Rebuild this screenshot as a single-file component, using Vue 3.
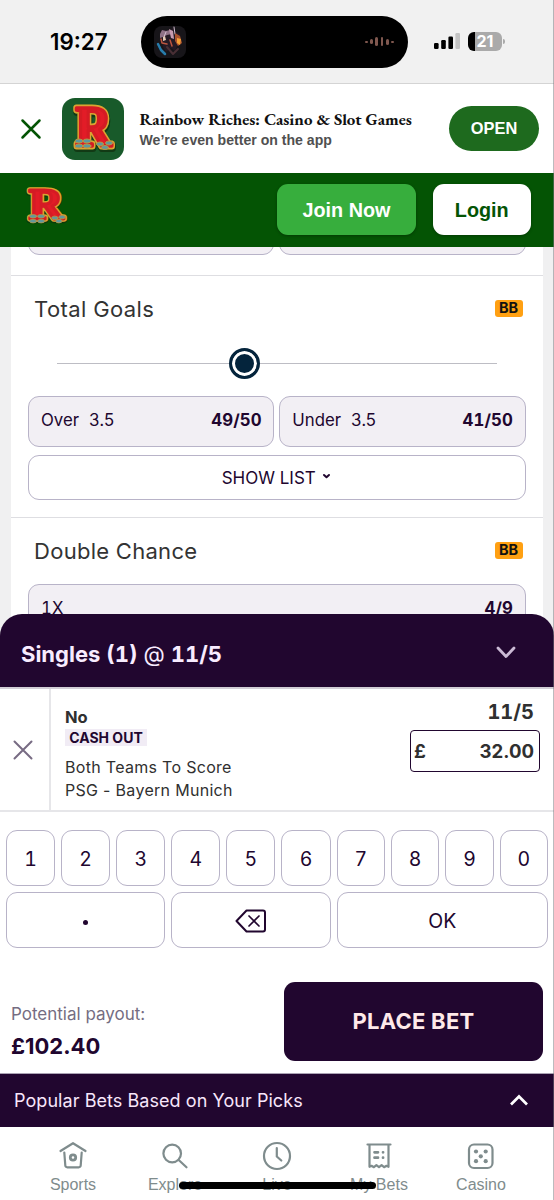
<script setup>
import { ref, computed } from 'vue'

const stake = ref('32.00')
const sliderPos = ref(42.9)

const potentialPayout = computed(() => (Number(stake.value) * 3.2).toFixed(2))

const selections = [
  { name: 'Over', line: '3.5', odds: '49/50' },
  { name: 'Under', line: '3.5', odds: '41/50' }
]

const digits = ['1', '2', '3', '4', '5', '6', '7', '8', '9', '0']
const bars = [2, 5, 9, 9, 6, 2]

function press(key) {
  stake.value += key
}

function backspace() {
  stake.value = stake.value.slice(0, -1)
}
</script>

<template>
  <div class="screen">
    <div class="status">
      <div class="time">19:27</div>
      <div class="island">
        <svg class="art" width="32" height="32" viewBox="0 0 32 32">
          <rect width="32" height="32" rx="8" fill="#171519" />
          <path d="M7 6l4-2 4 1 4-4 3 5 4 2 1 9-4 3-2 5-4-3-5 4-3-5-2-8z" fill="#241a24" />
          <path d="M6 8l2-4 4 1 4-1 2 4-5 1-4 2-3 1z" fill="#8f7286" />
          <path d="M15 3l2 9 3 1-1-8z" fill="#c79bb0" />
          <path d="M20 1l1 7M12 6l-2 5" stroke="#d3bfd0" stroke-width="1" />
          <path d="M9 11l2-1 1 4-3 1z" fill="#e2c9b4" />
          <path d="M21 7l5 3 2 7-4 3-3-5z" fill="#a9522e" />
          <path d="M23 12l4 1-1 6-3-2z" fill="#f5a136" />
          <path d="M7 13l1 4 5 1M16 14l2 6" stroke="#bc553f" stroke-width="1.5" fill="none" />
          <path d="M4 18l3 6 4 4" stroke="#287dac" stroke-width="2.5" fill="none" />
          <path d="M13 21l6 7 5-5" stroke="#492f35" stroke-width="2" fill="none" />
        </svg>
        <div class="wave">
          <i v-for="(h, i) in bars" :key="i" :style="{ height: h + 'px' }"></i>
        </div>
      </div>
      <svg class="signal" width="26" height="16" viewBox="0 0 26 16">
        <rect x="0" y="10" width="4.6" height="6" rx="1.2" />
        <rect x="7.2" y="7" width="4.6" height="9" rx="1.2" />
        <rect x="14.4" y="3.5" width="4.6" height="12.5" rx="1.2" />
        <rect x="21.4" y="0" width="4.6" height="16" rx="1.2" fill="#c4c4c4" />
      </svg>
      <div class="battery"><span>21</span></div>
      <i class="battery-tip"></i>
    </div>

    <div class="banner">
      <svg class="banner-close" width="20" height="20" viewBox="0 0 20 20">
        <path d="M1.5 1.5l17 17M18.5 1.5l-17 17" />
      </svg>
      <div class="app-icon">
        <svg width="62" height="62" viewBox="0 0 62 62">
          <text class="r r-shadow" x="14" y="49.5" textLength="36" lengthAdjust="spacingAndGlyphs">R</text>
          <text class="r r-gold" x="13.5" y="47.5" textLength="36" lengthAdjust="spacingAndGlyphs">R</text>
          <text class="r r-red" x="13.5" y="47.5" textLength="36" lengthAdjust="spacingAndGlyphs">R</text>
          <g class="clover">
            <ellipse cx="17" cy="43" rx="4" ry="2" /><ellipse cx="25" cy="43" rx="4" ry="2" />
            <ellipse cx="17" cy="48" rx="4" ry="2" /><ellipse cx="25" cy="48" rx="4" ry="2" />
            <ellipse cx="38" cy="46" rx="3.5" ry="2" /><ellipse cx="47" cy="45" rx="3.5" ry="2" />
            <ellipse cx="43" cy="49.5" rx="3.5" ry="2" />
          </g>
        </svg>
      </div>
      <div class="banner-text">
        <div class="banner-title">Rainbow Riches: Casino &amp; Slot Games</div>
        <div class="banner-sub">We’re even better on the app</div>
      </div>
      <button class="open">OPEN</button>
    </div>

    <header class="header">
      <svg class="logo" width="50" height="50" viewBox="0 0 62 62">
        <text class="r r-shadow" x="9.5" y="50" textLength="43" lengthAdjust="spacingAndGlyphs">R</text>
        <text class="r r-gold" x="9.5" y="48.5" textLength="43" lengthAdjust="spacingAndGlyphs">R</text>
        <text class="r r-red" x="9.5" y="48.5" textLength="43" lengthAdjust="spacingAndGlyphs">R</text>
        <g class="clover">
          <ellipse cx="15" cy="45" rx="4.5" ry="2.2" /><ellipse cx="25" cy="45" rx="4.5" ry="2.2" />
          <ellipse cx="15" cy="51" rx="4.5" ry="2.2" /><ellipse cx="25" cy="51" rx="4.5" ry="2.2" />
          <ellipse cx="42" cy="47" rx="4" ry="2.2" /><ellipse cx="51" cy="46" rx="4" ry="2.2" />
          <ellipse cx="47" cy="51" rx="4" ry="2.2" />
        </g>
      </svg>
      <button class="join">Join Now</button>
      <button class="login">Login</button>
    </header>

    <main class="markets">
      <div class="panel">
        <section class="market market-cut">
          <div class="odds-row">
            <div class="odd"></div>
            <div class="odd"></div>
          </div>
        </section>

        <section class="market">
          <div class="market-head">
            <h2 class="goals">Total Goals</h2>
            <span class="bb">BB</span>
          </div>
          <div class="slider">
            <div class="knob" :style="{ left: sliderPos + '%' }"></div>
          </div>
          <div class="odds-row">
            <div v-for="s in selections" :key="s.name" class="odd">
              <span class="odd-name">{{ s.name }}</span>
              <span class="odd-line">{{ s.line }}</span>
              <b>{{ s.odds }}</b>
            </div>
          </div>
          <div class="show-list">
            SHOW LIST
            <svg width="7" height="5" viewBox="0 0 7 5"><path d="M1 1l2.5 2.3L6 1" /></svg>
          </div>
        </section>

        <section class="market">
          <div class="market-head">
            <h2 class="double">Double Chance</h2>
            <span class="bb">BB</span>
          </div>
          <div class="odd odd-wide">
            <span>1X</span>
            <b>4/9</b>
          </div>
        </section>
      </div>
    </main>

    <div class="slip">
      <div class="slip-head">
        <div class="slip-title">Singles (1) <span>@</span> 11/5</div>
        <svg width="20" height="14" viewBox="0 0 20 14"><path d="M2 2l8 8.5L18 2" /></svg>
      </div>

      <div class="bet">
        <div class="bet-remove">
          <svg width="20" height="20" viewBox="0 0 20 20"><path d="M1.5 1.5l17 17M18.5 1.5l-17 17" /></svg>
        </div>
        <div class="bet-info">
          <div class="bet-pick">No</div>
          <div class="cash-out">CASH OUT</div>
          <div class="bet-market">Both Teams To Score</div>
          <div class="bet-event">PSG - Bayern Munich</div>
        </div>
        <div class="bet-stake">
          <div class="bet-odds">11/5</div>
          <div class="stake-box"><span>£</span><span>{{ stake }}</span></div>
        </div>
      </div>

      <div class="keypad">
        <button v-for="d in digits" :key="d" class="key" @click="press(d)">{{ d }}</button>
        <button class="key key-3" @click="press('.')"><i class="dot"></i></button>
        <button class="key key-3" @click="backspace">
          <svg width="32" height="24" viewBox="0 0 32 24">
            <path d="M11.5 1.5H28a2 2 0 0 1 2 2v17a2 2 0 0 1-2 2H11.5L1.5 12z" stroke-width="2" />
            <path d="M14 7l10 10M24 7L14 17" stroke-width="1.7" />
          </svg>
        </button>
        <button class="key key-4">OK</button>
      </div>

      <div class="place">
        <div class="payout">
          <div class="payout-label">Potential payout:</div>
          <div class="payout-value">£{{ potentialPayout }}</div>
        </div>
        <button class="place-bet">PLACE BET</button>
      </div>

      <div class="popular">
        <span>Popular Bets Based on Your Picks</span>
        <svg width="20" height="13" viewBox="0 0 20 13"><path d="M2 10.5l8-8 8 8" /></svg>
      </div>
    </div>

    <nav class="nav">
      <div class="nav-item">
        <svg width="30" height="30" viewBox="0 0 30 30">
          <path d="M2.5 11L15 3.2 27.5 11" />
          <path d="M6.3 12.5l1 13a2 2 0 0 0 2 1.800h11.4a2 2 0 0 0 2-1.800l1-13" />
          <circle cx="15" cy="17.5" r="2.700" stroke-width="2.800" />
        </svg>
        <span>Sports</span>
      </div>
      <div class="nav-item">
        <svg width="30" height="30" viewBox="0 0 30 30">
          <circle cx="12.2" cy="13.5" r="8.800" />
          <path d="M18.7 20l7.800 7.300" />
        </svg>
        <span>Explore</span>
      </div>
      <div class="nav-item">
        <svg width="30" height="30" viewBox="0 0 30 30">
          <circle cx="15" cy="16" r="13" />
          <path d="M14.8 8v8.500l4.500 4" />
        </svg>
        <span>Live</span>
      </div>
      <div class="nav-item">
        <svg width="30" height="30" viewBox="0 0 30 30">
          <path d="M3.5 4.500h23M5.500 5v21.800l2-1 2.400 1.400 2.500-2 2.600 2 2.600-2 2.500 2 2.400-1.400 2 1V5" />
          <path d="M10.500 12.300h3.500M10.500 17.700h3.500M19 12.300h.1M19 17.700h.1" stroke-width="2.700" />
        </svg>
        <span>My Bets</span>
      </div>
      <div class="nav-item">
        <svg width="30" height="30" viewBox="0 0 30 30">
          <rect x="3" y="4.500" width="23.500" height="23.500" rx="5" />
          <g class="pips">
            <circle cx="10" cy="11.500" r="2.100" /><circle cx="19.700" cy="11.500" r="2.100" />
            <circle cx="14.800" cy="16.300" r="2.100" />
            <circle cx="10" cy="21.200" r="2.100" /><circle cx="19.700" cy="21.200" r="2.100" />
          </g>
        </svg>
        <span>Casino</span>
      </div>
      <div class="home-bar"></div>
    </nav>
    <div class="edge"></div>
  </div>
</template>

<style>
body {
  margin: 0;
  background: #fff;
}
</style>

<style scoped>
* {
  box-sizing: border-box;
}

.screen {
  position: relative;
  width: 554px;
  height: 1200px;
  overflow: hidden;
  background: #fff;
  color: #21062f;
  font-family: Inter, 'Liberation Sans', sans-serif;
}

.edge {
  position: absolute;
  top: 0;
  right: 0;
  width: 1px;
  height: 1200px;
  background: rgba(120, 120, 125, 0.5);
}

button {
  border: 0;
  padding: 0;
  font-family: inherit;
}

svg {
  display: block;
  flex: none;
  overflow: visible;
  fill: none;
  stroke-linecap: round;
  stroke-linejoin: round;
}

.status {
  display: flex;
  align-items: center;
  height: 84px;
  padding-left: 50px;
  background: #f1f1f1;
  border-bottom: 1px solid #d4d4d4;
}

.time {
  width: 91px;
  color: #000;
  font-size: 22.3px;
  font-weight: 600;
}

.island {
  display: flex;
  align-items: center;
  justify-content: space-between;
  width: 267px;
  height: 52px;
  padding: 0 14px 0 13px;
  border-radius: 26px;
  background: #000;
}

.wave {
  display: flex;
  align-items: center;
  gap: 2.6px;
}

.wave i {
  width: 2.7px;
  border-radius: 2px;
  background: #80584f;
}

.signal {
  margin: -1px 0 0 26px;
  fill: #000;
}

.battery {
  width: 34px;
  height: 19px;
  margin: -1px 0 0 8px;
  border-radius: 6px;
  background: linear-gradient(90deg, #000 7px, #aaa 7px);
  color: #fff;
  font-size: 16px;
  font-weight: 700;
  line-height: 19px;
  text-align: center;
}

.battery-tip {
  width: 2px;
  height: 5px;
  margin: -1px 0 0 1px;
  border-radius: 0 2px 2px 0;
  background: #aaa;
}

.banner {
  display: flex;
  align-items: center;
  height: 89px;
  padding-left: 21px;
  font-family: 'Liberation Sans', Arial, sans-serif;
}

.banner-close {
  stroke: #045404;
  stroke-width: 2.5;
}

.app-icon {
  width: 62px;
  height: 62px;
  margin: 0 15.5px 0 21px;
  border-radius: 13px;
  background: #185a2a;
}

.r {
  font-family: 'Liberation Serif', serif;
  font-size: 56px;
  font-weight: 700;
}

.r-shadow {
  fill: #102d0d;
  stroke: #102d0d;
  stroke-width: 8;
  opacity: 0.7;
}

.r-gold {
  fill: #dba431;
  stroke: #dba431;
  stroke-width: 7;
}

.r-red {
  fill: #e21c27;
  stroke: #d51b24;
  stroke-width: 3.6;
}

.clover {
  fill: #5f989e;
  stroke: #b69643;
  stroke-width: 1;
}

.banner-text {
  width: 309.5px;
  padding-top: 1px;
}

.banner-title {
  color: #111;
  font-family: 'EB Garamond', 'Liberation Serif', serif;
  font-size: 16.9px;
  font-weight: 700;
  line-height: 21px;
  white-space: nowrap;
}

.banner-sub {
  color: #505050;
  font-size: 14.1px;
  font-weight: 700;
  line-height: 20px;
}

.open {
  width: 90px;
  height: 45px;
  border-radius: 23px;
  background: #1e6a1e;
  color: #fff;
  font-size: 16.4px;
  font-weight: 700;
}

.header {
  display: flex;
  align-items: center;
  height: 73.5px;
  padding-left: 21px;
  background: #045404;
}

.logo {
  margin-top: -9px;
}

.join,
.login {
  height: 51px;
  padding-top: 1px;
  border-radius: 11px;
  font-family: 'Liberation Sans', Arial, sans-serif;
  font-size: 19.8px;
  font-weight: 700;
  box-shadow: 0 1px 3px rgba(0, 0, 0, 0.3);
}

.join {
  width: 139px;
  margin: 0 16.5px 0 206px;
  background: #37ae3d;
  color: #fff;
}

.login {
  width: 98.5px;
  background: #fff;
  color: #045404;
}

.markets {
  height: 389.5px;
  padding: 0 11px;
  overflow: hidden;
  background: #f0f0f1;
}

.panel {
  height: 390px;
  background: #fff;
}

.market {
  height: 242px;
  padding: 0 17.5px 0 17px;
  border-top: 1px solid #dedee2;
}

.market-cut {
  display: flex;
  align-items: flex-end;
  height: 28.5px;
  padding-bottom: 20px;
  border-top: 0;
}

.market-cut .odds-row {
  flex: 1;
  height: 8.5px;
  align-items: flex-end;
  overflow: hidden;
}

.market-head {
  display: flex;
  align-items: center;
  justify-content: space-between;
  height: 66px;
  padding: 0 3px 0 6px;
}

h2 {
  margin: 0;
  color: #333;
  font-size: 22px;
  font-weight: 400;
}

.goals {
  letter-spacing: 0.4px;
}

.double {
  letter-spacing: 0.28px;
}

.bb {
  width: 28px;
  height: 17px;
  margin-top: -2px;
  border-radius: 3px;
  background: #ffa012;
  color: #111;
  font-size: 14.5px;
  font-weight: 700;
  line-height: 16px;
  text-align: center;
}

.slider {
  position: relative;
  height: 1px;
  margin: 21px 28.5px 0 28.5px;
  background: #bdbdc4;
}

.knob {
  position: absolute;
  top: -15px;
  width: 31px;
  height: 31px;
  margin-left: -16px;
  border: 3px solid #04243c;
  border-radius: 50%;
  background: #04243c;
  box-shadow: inset 0 0 0 3px #fff;
}

.odds-row {
  display: flex;
  gap: 5px;
  margin-top: 32px;
}

.market-cut .odds-row {
  margin-top: 0;
}

.odd {
  display: flex;
  flex: 1;
  align-items: center;
  height: 50.5px;
  padding: 0 11.5px 2.5px 12px;
  border: 1px solid #b8b3c8;
  border-radius: 11px;
  background: #f2eff4;
  font-size: 16.8px;
  font-variant-numeric: tabular-nums;
  flex-shrink: 0;
}

.odd b {
  margin-left: auto;
  letter-spacing: 0.1px;
}

.odd-name {
  margin-right: 10px;
}

.odd-line {
  letter-spacing: -0.4px;
}

.show-list {
  display: flex;
  align-items: center;
  justify-content: center;
  gap: 7px;
  height: 45px;
  margin-top: 8.5px;
  padding-right: 2px;
  border: 1px solid #b8b3c8;
  border-radius: 11px;
  font-size: 17px;
}

.show-list svg {
  margin-top: -2px;
  stroke: #21062f;
  stroke-width: 2;
}

.odd-wide {
  margin-top: 0;
}

.slip {
  position: relative;
  margin-top: -22px;
}

.slip-head {
  display: flex;
  align-items: center;
  justify-content: space-between;
  height: 73px;
  padding: 6px 38px 0 21px;
  border-radius: 22px 22px 0 0;
  background: #21062f;
  color: #f8ecff;
}

.slip-title {
  font-size: 22px;
  font-weight: 700;
  font-variant-numeric: tabular-nums;
}

.slip-title span {
  font-weight: 400;
}

.slip-head svg {
  margin-top: -1px;
  stroke: #cbbad5;
  stroke-width: 2.8;
}

.bet {
  display: flex;
  height: 125px;
  border-top: 2px solid #d2ced6;
  border-bottom: 2px solid #e6e6e9;
  background: #fff;
  color: #303030;
}

.bet-remove {
  display: flex;
  align-items: center;
  width: 51px;
  padding-left: 13px;
  border-right: 2px solid #e6e6e9;
}

.bet-remove svg {
  stroke: #776b83;
  stroke-width: 2;
}

.bet-info {
  flex: 1;
  padding: 17px 0 0 14px;
  font-size: 16px;
}

.bet-pick {
  font-size: 16.5px;
  font-weight: 700;
  line-height: 22px;
}

.cash-out {
  width: 82px;
  height: 17px;
  margin: 1px 0 10px;
  background: #f1ecf5;
  color: #21062f;
  font-size: 14px;
  font-weight: 700;
  line-height: 17px;
  text-align: center;
  white-space: nowrap;
}

.bet-market,
.bet-event {
  letter-spacing: 0.3px;
  line-height: 22.5px;
}

.bet-stake {
  width: 130px;
  margin-right: 14px;
  padding-top: 10.5px;
  font-weight: 700;
}

.bet-odds {
  padding-right: 6px;
  font-size: 20px;
  font-variant-numeric: tabular-nums;
  line-height: 24px;
  text-align: right;
}

.stake-box {
  display: flex;
  align-items: center;
  justify-content: space-between;
  height: 42px;
  margin-top: 6px;
  padding: 0 5px 0 3px;
  border: 1px solid #21062f;
  border-radius: 4px;
  font-size: 18.6px;
}

.keypad {
  display: grid;
  grid-template-columns: repeat(6, 49.1px) repeat(4, 1fr);
  gap: 6px;
  padding: 17.5px 6px 0;
}

.key {
  display: flex;
  align-items: center;
  justify-content: center;
  height: 56px;
  padding-top: 3px;
  border: 1px solid #b8b3c8;
  border-radius: 11px;
  background: #fff;
  color: #21062f;
  font-size: 19.5px;
  font-variant-numeric: tabular-nums;
}

.key-3 {
  grid-column: span 3;
}

.key-4 {
  grid-column: span 4;
}

.key svg {
  stroke: #21062f;
}

.dot {
  width: 5px;
  height: 5px;
  margin-top: 3px;
  border-radius: 50%;
  background: #21062f;
}

.place {
  display: flex;
  justify-content: space-between;
  height: 125px;
  padding: 34px 11px 0;
}

.payout {
  padding-top: 21px;
}

.payout-label {
  color: #756d82;
  font-size: 17px;
  line-height: 22px;
}

.payout-value {
  margin-top: 7px;
  font-size: 22px;
  font-weight: 700;
  line-height: 28px;
}

.place-bet {
  width: 259px;
  height: 79px;
  border-radius: 11px;
  background: #21062f;
  color: #ffe9e9;
  font-size: 22px;
  font-weight: 700;
  letter-spacing: 0.25px;
}

.popular {
  display: flex;
  align-items: center;
  justify-content: space-between;
  height: 54.5px;
  padding: 0 25px 0 14px;
  border-top: 1px solid #aaa2b3;
  background: #21062f;
  color: #f8e6fb;
  font-size: 18px;
  letter-spacing: 0.06px;
}

.popular svg {
  stroke: #fff;
  stroke-width: 2.7;
  stroke-linecap: butt;
  stroke-linejoin: miter;
}

.nav {
  position: relative;
  display: flex;
  height: 73px;
  padding: 0 22px;
}

.nav-item {
  display: flex;
  flex: 1;
  flex-direction: column;
  align-items: center;
  padding-top: 13px;
  color: #7f8c8d;
  font-family: 'Liberation Sans', Arial, sans-serif;
  font-size: 16px;
  line-height: 18px;
}

.nav-item span {
  margin-top: 6px;
}

.nav-item svg {
  stroke: #7f8c8d;
  stroke-width: 2.2;
}

.pips circle {
  fill: #7f8c8d;
  stroke: none;
}

.home-bar {
  position: absolute;
  top: 54.5px;
  left: 179px;
  width: 197px;
  height: 7.5px;
  border-radius: 4px;
  background: #000;
}
</style>
